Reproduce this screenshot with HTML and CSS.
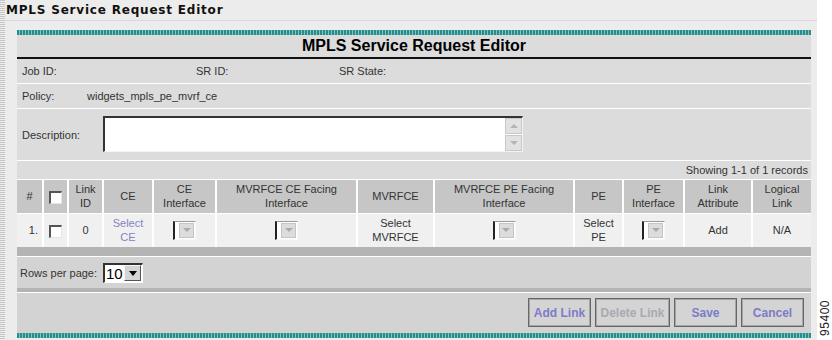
FILE: index.html
```html
<!DOCTYPE html>
<html>
<head>
<meta charset="utf-8">
<title>MPLS Service Request Editor</title>
<link rel="stylesheet" href="styles.css">
</head>
<body>
<div class="screen">
  <div class="strip"></div>
  <div class="main">
    <div class="apptitle">MPLS Service Request Editor</div>
    <div class="panel">
      <div class="teal"></div>
      <div class="ptitle">MPLS Service Request Editor</div>
      <div class="row info">
        <span class="c1">Job ID:</span><span class="c2">SR ID:</span><span class="c3">SR State:</span>
      </div>
      <div class="row policy"><span class="lbl">Policy:</span><span>widgets_mpls_pe_mvrf_ce</span></div>
      <div class="row desc">
        <span class="lbl">Description:</span>
        <div class="textarea">
          <div class="ta-body"></div>
          <div class="ta-scroll"><span class="sb up"><i></i></span><span class="sb down"><i></i></span></div>
        </div>
      </div>
      <div class="row showing">Showing 1-1 of 1 records</div>
      <table class="grid">
        <colgroup>
          <col class="w1"><col class="w2"><col class="w3"><col class="w4"><col class="w5"><col class="w6">
          <col class="w7"><col class="w8"><col class="w9"><col class="w10"><col class="w11"><col class="w12">
        </colgroup>
        <thead>
          <tr>
            <th>#</th>
            <th><span class="cb"></span></th>
            <th>Link<br>ID</th>
            <th>CE</th>
            <th>CE<br>Interface</th>
            <th>MVRFCE CE Facing<br>Interface</th>
            <th>MVRFCE</th>
            <th>MVRFCE PE Facing<br>Interface</th>
            <th>PE</th>
            <th>PE<br>Interface</th>
            <th>Link<br>Attribute</th>
            <th>Logical<br>Link</th>
          </tr>
        </thead>
        <tbody>
          <tr>
            <td class="num">1.</td>
            <td><span class="cb"></span></td>
            <td>0</td>
            <td class="link">Select<br>CE</td>
            <td><span class="dd"><span class="ddb"><i></i></span></span></td>
            <td><span class="dd"><span class="ddb"><i></i></span></span></td>
            <td>Select<br>MVRFCE</td>
            <td><span class="dd"><span class="ddb"><i></i></span></span></td>
            <td>Select<br>PE</td>
            <td><span class="dd"><span class="ddb"><i></i></span></span></td>
            <td>Add</td>
            <td>N/A</td>
          </tr>
        </tbody>
      </table>
      <div class="bar"></div>
      <div class="row rpp">
        <span class="lbl">Rows per page:</span>
        <span class="select"><span class="val">10</span><span class="selbtn"><i></i></span></span>
      </div>
      <div class="bar thin"></div>
      <div class="row buttons">
        <button class="btn w-add">Add Link</button>
        <button class="btn w-del disabled">Delete Link</button>
        <button class="btn w-save">Save</button>
        <button class="btn w-cancel">Cancel</button>
      </div>
      <div class="teal"></div>
    </div>
  </div>
  <div class="side"><span class="fig">95400</span></div>
</div>
</body>
</html>
```
FILE: styles.css
```css
* { box-sizing: border-box; }
html, body { margin: 0; padding: 0; }
body {
  width: 832px;
  height: 340px;
  overflow: hidden;
  background: #ececec;
  font-family: "Liberation Sans", Arial, sans-serif;
  font-size: 11px;
  color: #333;
}
.screen {
  display: flex;
  height: 340px;
}
.strip {
  width: 5px;
  flex: none;
  background: repeating-linear-gradient(180deg, #c4c4c4 0 1px, #efefef 1px 2px);
}
.main {
  width: 812px;
  flex: none;
  background: #ececec;
}
.apptitle {
  height: 21px;
  padding: 3px 0 0 1px;
  font-family: "DejaVu Sans", Verdana, sans-serif;
  font-weight: bold;
  font-size: 12px;
  letter-spacing: 0.8px;
  color: #111;
  border-bottom: 1px solid #ddd5de;
}
.panel {
  margin: 9px 0 0 12px;
  width: 794px;
  background: #dcdcdc;
}
.teal {
  height: 5px;
  background: repeating-linear-gradient(90deg, #2a8c8a 0 2px, #7cc6c2 2px 3px);
}
.ptitle {
  height: 24px;
  text-align: center;
  font-weight: bold;
  font-size: 16px;
  color: #000;
  line-height: 22px;
  border-bottom: 2px solid #111;
}
.row {
  display: flex;
  align-items: center;
  padding-left: 5px;
  border-bottom: 1px solid #fff;
}
.info, .policy { height: 25px; }
.info .c1 { width: 174px; }
.info .c2 { width: 143px; }
.policy .lbl { width: 65px; }
.desc { height: 52px; }
.desc .lbl { width: 81px; }
.textarea {
  width: 420px;
  height: 36px;
  display: flex;
  background: #fff;
  border-top: 2px solid #333;
  border-left: 2px solid #333;
  border-right: 1px solid #f4f4f4;
  border-bottom: 1px solid #f4f4f4;
  margin-top: -2px;
}
.ta-body { flex: 1; }
.ta-scroll {
  width: 17px;
  display: flex;
  flex-direction: column;
  justify-content: space-between;
  background: #fff;
}
.sb {
  height: 16px;
  background: #e2e2e2;
  border: 1px solid #c8c8c8;
  display: flex;
  align-items: center;
  justify-content: center;
}
.sb i {
  width: 0; height: 0;
  border-left: 4px solid transparent;
  border-right: 4px solid transparent;
}
.sb.up i { border-bottom: 4px solid #b4b4b4; }
.sb.down i { border-top: 4px solid #b4b4b4; }
.showing {
  height: 19px;
  justify-content: flex-end;
  padding-right: 3px;
  color: #333;
}
.grid {
  width: 794px;
  border-collapse: collapse;
  table-layout: fixed;
}
.w1 { width: 26px; } .w2 { width: 25px; } .w3 { width: 35px; } .w4 { width: 50px; }
.w5 { width: 63px; } .w6 { width: 141px; } .w7 { width: 77px; } .w8 { width: 140px; }
.w9 { width: 49px; } .w10 { width: 61px; } .w11 { width: 68px; } .w12 { width: 59px; }
.grid th, .grid td {
  border-left: 2px solid #fff;
  padding: 0;
  text-align: center;
  vertical-align: middle;
  font-weight: normal;
  line-height: 14px;
  color: #333;
}
.grid th:first-child, .grid td:first-child { border-left: none; }
.grid th {
  height: 33px;
  background: #c6c6c6;
  border-bottom: 1px solid #fff;
}
.grid td {
  height: 34px;
  background: #f0f0f0;
}
.grid td.num { text-align: right; padding-right: 4px; }
.grid td.link { color: #8484c4; }
.cb {
  display: inline-block;
  width: 13px;
  height: 13px;
  background: #fff;
  border-top: 2px solid #555;
  border-left: 2px solid #555;
  border-right: 1px solid #e4e4e4;
  border-bottom: 1px solid #e4e4e4;
  vertical-align: middle;
}
.dd {
  display: inline-flex;
  justify-content: flex-end;
  width: 23px;
  height: 19px;
  background: #fff;
  border-left: 2px solid #222;
  border-top: 1px solid #999;
  border-right: 1px solid #f8f8f8;
  border-bottom: 1px solid #f8f8f8;
  vertical-align: middle;
  padding: 1px;
}
.ddb {
  width: 15px;
  background: #dcdcdc;
  border: 1px solid #c4c4c4;
  display: flex;
  align-items: center;
  justify-content: center;
}
.ddb i, .selbtn i {
  width: 0; height: 0;
  border-left: 4px solid transparent;
  border-right: 4px solid transparent;
  border-top: 4px solid #aaa;
}
.bar {
  height: 10px;
  background: #b4b4b4;
  border-bottom: 1px solid #fff;
}
.bar.thin { height: 5px; }
.rpp {
  height: 31px;
  background: #d3d3d3;
  border-bottom: none;
  padding-left: 3px;
}
.rpp .lbl { width: 83px; }
.select {
  display: inline-flex;
  align-items: center;
  width: 40px;
  height: 20px;
  background: #fff;
  border-top: 2px solid #333;
  border-left: 2px solid #333;
  border-right: 1px solid #fff;
  border-bottom: 1px solid #fff;
}
.select .val {
  flex: 1;
  font-size: 15px;
  padding-left: 1px;
  color: #000;
}
.selbtn {
  width: 17px;
  height: 16px;
  margin-right: 1px;
  background: #d4d4d4;
  border-top: 1px solid #f4f4f4;
  border-left: 1px solid #f4f4f4;
  border-right: 1px solid #555;
  border-bottom: 1px solid #555;
  display: flex;
  align-items: center;
  justify-content: center;
}
.selbtn i { border-top-color: #000; border-left-width: 4px; border-right-width: 4px; border-top-width: 5px; }
.buttons {
  height: 40px;
  background: #d3d3d3;
  border-bottom: none;
  justify-content: flex-end;
  gap: 4px;
  padding-right: 7px;
  align-items: flex-start;
  padding-top: 5px;
}
.btn {
  height: 29px;
  background: #d4d4d4;
  border: 1px solid #666;
  box-shadow: inset 0 0 0 1px #a6a6a6;
  font-family: "Liberation Sans", Arial, sans-serif;
  font-weight: bold;
  font-size: 12px;
  color: #7c7cc6;
  padding: 0;
}
.btn.disabled { color: #a9a9b0; }
.w-add { width: 63px; }
.w-del { width: 75px; }
.w-save { width: 63px; }
.w-cancel { width: 63px; }
.side {
  flex: 1;
  background: #fff;
  display: flex;
  flex-direction: column;
  justify-content: flex-end;
  align-items: center;
  padding-bottom: 4px;
}
.fig {
  writing-mode: vertical-rl;
  transform: rotate(180deg);
  font-size: 12px;
  letter-spacing: 0.5px;
  color: #222;
}
```
